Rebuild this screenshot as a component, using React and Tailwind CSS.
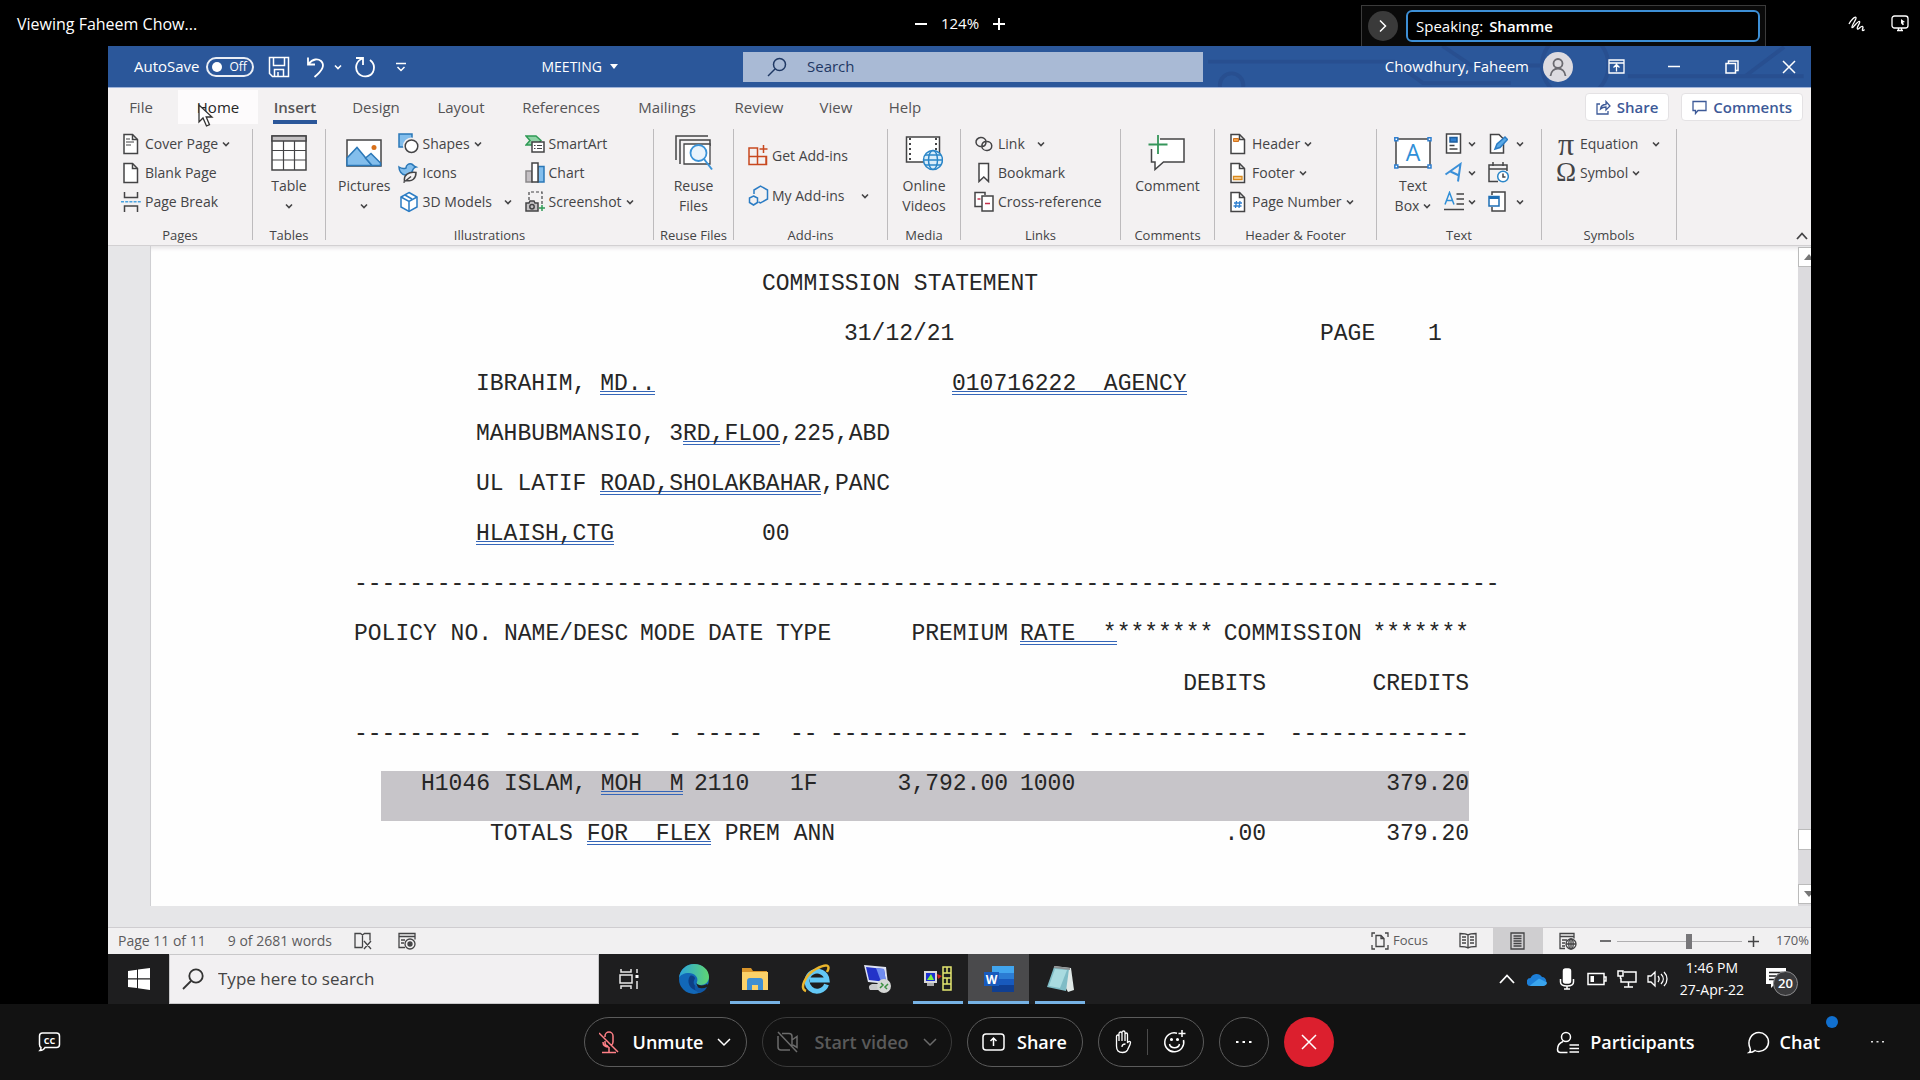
import React from "react";

const INK = "#444446";
const BLUE = "#2f7fcf";

function Svg({ w = 20, h = w, children, ...rest }) {
  return (
    <svg width={w} height={h} viewBox={`0 0 ${w} ${h}`} fill="none" stroke={INK} strokeWidth="1.5" className="shrink-0" aria-hidden="true" {...rest}>
      {children}
    </svg>
  );
}

const Caret = ({ size = 8 }) => (
  <svg width={size} height={size} viewBox="0 0 8 8" fill="none" stroke="currentColor" strokeWidth="1.6" className="shrink-0" aria-hidden="true">
    <path d="M1 2.5 4 5.5 7 2.5" />
  </svg>
);

/* ---------- ribbon icons ---------- */

const PageShape = ({ children }) => (
  <Svg w={18} h={22}>
    <path d="M2 1.5h8.5l5 5v14H2z" fill="#fff" />
    <path d="M10.5 1.5v5h5" />
    {children}
  </Svg>
);
const CoverPageIcon = () => (
  <PageShape><path d="M4 6h4M4 9h8M4 12h5" strokeWidth="1.2" /></PageShape>
);
const HeaderIcon = () => (
  <PageShape><path d="M4.5 5.5h5v3h-5z" fill="#f3a24a" stroke="#d1731f" strokeWidth="1" /></PageShape>
);
const FooterIcon = () => (
  <PageShape><path d="M4.5 14.5h8.500v3h-8.500z" fill="#fbd9a8" stroke="#d98a1e" strokeWidth="1.3" /></PageShape>
);
const PageNumberIcon = () => (
  <PageShape><path d="M7.500 10l-1 7M11 10l-1 7M5 12h8M4.500 15h8" stroke={BLUE} strokeWidth="1.3" /></PageShape>
);
const PageBreakIcon = () => (
  <Svg w={20} h={22}>
    <path d="M3.500 1v5.500h13V1M3.500 21v-6h13v6" />
    <path d="M0 10.800h20" stroke="#4aa3df" strokeDasharray="3 1.200" />
  </Svg>
);
const TableIcon = () => (
  <Svg w={36} h={36}>
    <path d="M1 1h34v34H1z" fill="#fff" />
    <path d="M1 1h34v5H1z" fill="#c4c2c4" />
    <path d="M1 15.500h34M1 25h34M12.500 6v29M23.500 6v29" strokeWidth="1.200" />
  </Svg>
);
const PicturesIcon = () => (
  <Svg w={36} h={28}>
    <path d="M1 1h34v26H1z" fill="#fff" />
    <path d="M1 19 11 8.500 26 26.500H1z" fill="#83beec" stroke="#2b78b8" />
    <path d="M19.500 19 25 14.500 34.500 24v2.500H26z" fill="#83beec" stroke="#2b78b8" />
    <circle cx="28" cy="8.500" r="2.500" fill="#d8701a" stroke="none" />
  </Svg>
);
const ShapesIcon = () => (
  <Svg w={21} h={21}>
    <path d="M1 1h13v13H1z" fill="#83beec" stroke="#2b78b8" />
    <circle cx="13.500" cy="13" r="7.800" fill="#f3f1f2" stroke="#f3f1f2" />
    <circle cx="13.500" cy="13.200" r="6.300" fill="#fff" />
  </Svg>
);
const IconsIcon = () => (
  <Svg w={21} h={21}>
    <path d="M1 5c3 2 5 2 7 1 0-3 3-5 5.500-4 2 1 2 2 4.500 3-2 .500-2 1-3 2.500-1 4-5 6-8 5.500C3.500 12.500 1 9 1 5z" fill="#83beec" stroke="#2b78b8" />
    <path d="M6.500 19c-1-6 4-9.500 11.500-8.500 0 6-4 9.500-9 8zM5.500 20.500l7.500-6" fill="#f3f1f2" />
  </Svg>
);
const CubeIcon = () => (
  <Svg w={20} h={22} stroke="#2b7cc4">
    <path d="M10 1.500 18 6v10l-8 4.500L2 16V6z" fill="#fff" />
    <path d="M2 6l8 4.500L18 6M10 10.500v10M6 4l7 4" />
  </Svg>
);
const SmartArtIcon = () => (
  <Svg w={20} h={18}>
    <path d="M1 1h10l5 4.500L12 10H1l4-4.500z" fill="#8fd3a6" stroke="#2f9a55" />
    <path d="M7 7h12v10H7z" fill="#fff" />
    <path d="M9 10.500h1.500M12 10.500h5M9 13.500h1.500M12 13.500h5" strokeWidth="1.200" />
  </Svg>
);
const ChartIcon = () => (
  <Svg w={20} h={21}>
    <path d="M1 9h6v11H1z" fill="#c4c0c4" stroke="#8a888a" />
    <path d="M13 4.500h6V20h-6z" fill="#83beec" stroke="#2b78b8" />
    <path d="M7 1h6v19H7z" fill="#fff" />
  </Svg>
);
const ScreenshotIcon = () => (
  <Svg w={20} h={21}>
    <path d="M4 9V1h13v13" strokeDasharray="3 2" strokeWidth="1.200" />
    <path d="M1 12h3l1-2h4l1 2h3v8H1z" fill="#c4c2c4" />
    <circle cx="7" cy="15.700" r="2.200" />
    <path d="M17 14v6M14 17h6" stroke="#2f9a55" />
  </Svg>
);
const ReuseIcon = () => (
  <Svg w={38} h={36}>
    <path d="M1 25V1h32M5 29V5h30v6" />
    <path d="M9 9h26v20H9z" fill="#fff" strokeWidth="1.300" />
    <circle cx="23.500" cy="18" r="8" fill="#eaf4fc" stroke="#3a93d8" strokeWidth="1.800" />
    <path d="M29 24l8 10.500" stroke="#3a93d8" strokeWidth="2" />
  </Svg>
);
const GetAddinsIcon = () => (
  <Svg w={20} h={21} stroke="#c8481f">
    <path d="M1 3h8.500v16.500H1zM1 11.500h17.500v8H9.500M9.500 8v11M15.500 0v8M11.500 4h8M18 11.500v8" />
  </Svg>
);
const MyAddinsIcon = () => (
  <Svg w={21} h={21} stroke="#2b7cc4">
    <path d="M6 9V5l6.500-4 7 4v9l-7 4-2-1" />
    <path d="M5.500 11l4 2v4.500l-4 2.500-4-2.500V13z" />
  </Svg>
);
const OnlineVideoIcon = () => (
  <Svg w={38} h={36}>
    <path d="M1.500 2h33v25h-33z" fill="#fff" />
    <path d="M5 3v23M31 3v12" strokeWidth="2" strokeDasharray="2 3" />
    <circle cx="28" cy="25" r="9.500" fill="#d9edfa" stroke="#2b86c8" />
    <ellipse cx="28" cy="25" rx="4.500" ry="9.500" stroke="#2b86c8" />
    <path d="M18.500 25h19M20 20h16M20 30h16" stroke="#2b86c8" />
  </Svg>
);
const LinkIcon = () => (
  <Svg w={20} h={16}>
    <path d="M7.500 10.500a5 4.500 0 1 1 4.500-4.800M12.500 5.500a5 4.500 0 1 1-4.700 5" />
    <path d="M12 5.700c0 3-2 4.800-4.500 4.800M7.800 10.500c0-3 2-5 4.700-5" />
  </Svg>
);
const BookmarkIcon = () => (
  <Svg w={20} h={21}><path d="M5 1.500h9.500v18l-4.700-4.500L5 19.500z" fill="#fff" /></Svg>
);
const CrossRefIcon = () => (
  <Svg w={20} h={21}>
    <path d="M8 15.500H1v-14h10V4" fill="#fff" />
    <path d="M8 5h11v15H8z" fill="#fff" />
    <path d="M3.500 8h3M11 12.500h5" stroke="#c4314b" />
  </Svg>
);
const CommentIcon = () => (
  <Svg w={38} h={36}>
    <path d="M12 4h24v23H15.500L7 34.500V27H3.500V14" fill="#fff" />
    <path d="M10 0v19M.5 9.500h19" stroke="#35955a" strokeWidth="1.800" />
  </Svg>
);
const TextBoxIcon = () => (
  <Svg w={38} h={32}>
    <path d="M2 2h34v28H2z" fill="#fff" />
    <path d="M.8.8h3v3h-3zM34 .8h3v3h-3zM.8 28h3v3h-3zM34 28h3v3h-3z" fill="#fff" stroke={BLUE} />
    <text x="19" y="24" textAnchor="middle" fontSize="23" fontFamily="Open Sans, sans-serif" fill="#2f8fd8" stroke="none">A</text>
  </Svg>
);
const QuickPartsIcon = () => (
  <Svg w={20} h={21}>
    <path d="M2.500 1h14v19h-14z" fill="#fff" />
    <path d="M6 4.500h7v4.500H6z" fill={BLUE} stroke="#1f5f9f" />
    <path d="M5.500 12.500h5M5.500 16h8" />
  </Svg>
);
const WordArtIcon = () => (
  <Svg w={20} h={21} stroke="#3a8fd8" strokeWidth="2">
    <path d="M1.500 12.500 16.500 2l-2.500 17.500M6.500 9.500l8.500 4" />
  </Svg>
);
const DropCapIcon = () => (
  <Svg w={20} h={21}>
    <path d="M1 13.500 5.500 1.500l4.500 12M2.800 9.500h5.400" stroke="#2f8fd8" />
    <path d="M12.500 3H20M12.500 8H20M12.500 13H20M0 18.500h20" />
  </Svg>
);
const SignatureIcon = () => (
  <Svg w={20} h={21}>
    <path d="M2.500 1.500h8.500l4.500 4.500v14h-13z" fill="#fff" />
    <path d="M7 16l2-5 8-7 2.500 2.500-7.500 8z" fill="#5aa9e6" stroke="#2b7cc4" />
  </Svg>
);
const DateTimeIcon = () => (
  <Svg w={21} h={21}>
    <path d="M10 19.500H1V3h18v6M1 7h18M5 0v4M15 0v4" />
    <circle cx="15" cy="14.500" r="5.300" fill="#fff" stroke="#2b86c8" />
    <path d="M15 11.500v3.500h2.500" />
  </Svg>
);
const ObjectIcon = () => (
  <Svg w={20} h={21}>
    <path d="M4 4V1h13v19H4v-4" fill="#fff" />
    <path d="M1 5.500h10v9.500H1z" fill="#fff" stroke="#1f6fb5" />
    <path d="M1 6.500h10" stroke="#1f6fb5" strokeWidth="3" />
  </Svg>
);

/* ---------- ribbon building blocks ---------- */

function Small({ icon, label, caret, gap = "gap-1" }) {
  return (
    <button className="flex h-[29px] items-center gap-1 whitespace-nowrap">
      <span className="flex w-5 justify-center">{icon}</span>
      <span className={`flex items-center ${gap}`}>
        {label && <span>{label}</span>}
        {caret && <Caret />}
      </span>
    </button>
  );
}

function Big({ icon, lines, caret, inlineCaret }) {
  return (
    <button className="flex h-[87px] flex-col items-center">
      <span className="flex h-[47px] items-center">{icon}</span>
      {lines.map((l, i) => (
        <span key={l} className="flex h-5 items-center gap-1">
          {l}
          {inlineCaret && i === lines.length - 1 && <Caret />}
        </span>
      ))}
      {caret && <span className="flex h-5 items-center"><Caret /></span>}
    </button>
  );
}

function Group({ label, width, body = "justify-center", children }) {
  return (
    <section className={`flex h-[111px] shrink-0 flex-col border-r border-[#bdbbbd] ${width}`}>
      <div className={`flex h-[87px] ${body}`}>{children}</div>
      <h2 className="mt-[9px] h-[15px] text-center text-[13px] leading-5 whitespace-nowrap">{label}</h2>
    </section>
  );
}

function Ribbon() {
  return (
    <div className="flex h-[118px] border-b border-[#d2d0d2] bg-[#f3f1f2] pt-px text-sm text-[#444446]">
      <Group label="Pages" width="w-[145px]" body="flex-col pl-[13px]">
        <Small icon={<CoverPageIcon />} label="Cover Page" caret />
        <Small icon={<PageShape />} label="Blank Page" />
        <Small icon={<PageBreakIcon />} label="Page Break" />
      </Group>
      <Group label="Tables" width="w-[73px]">
        <Big icon={<TableIcon />} lines={["Table"]} caret />
      </Group>
      <Group label="Illustrations" width="w-[328px]" body="justify-start gap-2 pl-3">
        <Big icon={<PicturesIcon />} lines={["Pictures"]} caret />
        <div className="w-[118px]">
          <Small icon={<ShapesIcon />} label="Shapes" caret />
          <Small icon={<IconsIcon />} label="Icons" />
          <Small icon={<CubeIcon />} label="3D Models" caret gap="gap-3" />
        </div>
        <div>
          <Small icon={<SmartArtIcon />} label="SmartArt" />
          <Small icon={<ChartIcon />} label="Chart" />
          <Small icon={<ScreenshotIcon />} label="Screenshot" caret />
        </div>
      </Group>
      <Group label="Reuse Files" width="w-[80px]">
        <Big icon={<ReuseIcon />} lines={["Reuse", "Files"]} />
      </Group>
      <Group label="Add-ins" width="w-[154px]" body="flex-col gap-[11px] pt-3 pl-[14px]">
        <Small icon={<GetAddinsIcon />} label="Get Add-ins" />
        <Small icon={<MyAddinsIcon />} label="My Add-ins" caret gap="gap-4" />
      </Group>
      <Group label="Media" width="w-[73px]">
        <Big icon={<OnlineVideoIcon />} lines={["Online", "Videos"]} />
      </Group>
      <Group label="Links" width="w-[160px]" body="flex-col pl-[13px]">
        <Small icon={<LinkIcon />} label="Link" caret gap="gap-3" />
        <Small icon={<BookmarkIcon />} label="Bookmark" />
        <Small icon={<CrossRefIcon />} label="Cross-reference" />
      </Group>
      <Group label="Comments" width="w-[94px]">
        <Big icon={<CommentIcon />} lines={["Comment"]} />
      </Group>
      <Group label="Header & Footer" width="w-[162px]" body="flex-col pl-[13px]">
        <Small icon={<HeaderIcon />} label="Header" caret />
        <Small icon={<FooterIcon />} label="Footer" caret />
        <Small icon={<PageNumberIcon />} label="Page Number" caret />
      </Group>
      <Group label="Text" width="w-[165px]" body="justify-start gap-3 pl-[17px]">
        <Big icon={<TextBoxIcon />} lines={["Text", "Box"]} inlineCaret />
        <div>
          <Small icon={<QuickPartsIcon />} caret />
          <Small icon={<WordArtIcon />} caret />
          <Small icon={<DropCapIcon />} caret />
        </div>
        <div>
          <Small icon={<SignatureIcon />} caret gap="pl-1" />
          <Small icon={<DateTimeIcon />} />
          <Small icon={<ObjectIcon />} caret gap="pl-1" />
        </div>
      </Group>
      <Group label="Symbols" width="w-[135px]" body="flex-col pl-[14px]">
        <Small icon={<span className="font-['Liberation_Serif',serif] text-[32px] leading-none">π</span>} label="Equation" caret gap="gap-[14px]" />
        <Small icon={<span className="font-['Liberation_Serif',serif] text-[27px] leading-none">Ω</span>} label="Symbol" caret />
      </Group>
      <button aria-label="Collapse the ribbon" className="mr-0.5 mb-1 ml-auto self-end">
        <Svg w={14} h={10}><path d="M2 8l5-5.500L12 8" strokeWidth="1.800" /></Svg>
      </button>
    </div>
  );
}

/* ---------- Word window ---------- */

function TitleBar() {
  return (
    <header className="relative grid h-[42px] shrink-0 grid-cols-[635px_460px_1fr] items-center overflow-hidden border-b border-[#9fb3d9] bg-[#2b579a] text-white">
      <svg className="absolute inset-y-0 right-0 h-full" width="620" height="42" viewBox="0 0 620 42" fill="none" stroke="#284f90" strokeWidth="4" aria-hidden="true">
        <path d="M10 16h190l30 22h90M440 31h180M560 31l40-30M250 0l30 20h70" />
        <circle cx="386" cy="20" r="34" />
        <circle cx="34" cy="40" r="12" />
      </svg>
      <div className="relative flex h-full items-center pl-[26px] text-[15px]">
        <label htmlFor="autosave" className="mr-1.5">AutoSave</label>
        <button id="autosave" role="switch" aria-checked="false" className="mr-[14px] flex h-5 w-12 items-center gap-2 rounded-full border-2 border-white/90 pl-1 text-xs leading-none">
          <span className="size-[10px] rounded-full bg-white" />Off
        </button>
        <button aria-label="Save" className="mr-4">
          <Svg w={22} h={22} stroke="#fff"><path d="M1.500 1.500h19v19h-16l-3-3zM5.500 1.500v8h11v-8M6.500 20.500v-7h9v7M10 16v4.500" /></Svg>
        </button>
        <button aria-label="Undo" className="mr-2 flex items-center gap-2">
          <Svg w={20} h={22} stroke="#fff" strokeWidth="1.800"><path d="M2 1.500v7h7M2.500 8C7 2.500 12 2.500 15 5c4 4 2 9-6.500 16" /></Svg>
          <Caret />
        </button>
        <button aria-label="Redo" className="mr-5 ml-1">
          <Svg w={22} h={22} stroke="#fff" strokeWidth="1.800"><path d="M2 2h7v7M8.500 2.500C2 5 .5 12 4 17c4 5 12 4.500 15-1 2-5 1-9-3-12" /></Svg>
        </button>
        <button aria-label="Customize quick access toolbar">
          <Svg w={10} h={10} stroke="#fff"><path d="M0 1.500h10M1.500 5 5 8.500 8.500 5" /></Svg>
        </button>
        <button className="mr-[125px] ml-auto flex items-center gap-2 text-sm">
          MEETING
          <svg width="8" height="5" viewBox="0 0 8 5" fill="#fff" aria-hidden="true"><path d="M0 0h8L4 5z" /></svg>
        </button>
      </div>
      <label className="relative flex h-[30px] items-center gap-5 bg-[#a9bad5] pl-6 text-[#1f3864]">
        <Svg w={20} h={20} stroke="#1f3864"><circle cx="12.500" cy="7.500" r="6" /><path d="M8 12 1 19" /></Svg>
        <input aria-label="Search" placeholder="Search" className="w-full bg-transparent text-[15px] outline-none placeholder:text-[#1f3864]" />
      </label>
      <div className="relative flex items-center justify-end pr-[15px] text-[15px]">
        <span className="mr-[14px] whitespace-nowrap">Chowdhury, Faheem</span>
        <span className="mr-[35px] flex size-[30px] items-center justify-center rounded-full bg-[#dddbe0]">
          <Svg w={20} h={20} stroke="#6b6a70" strokeWidth="1.800"><circle cx="10" cy="6.500" r="4.500" /><path d="M2.500 19c1-10 14-10 15 0" /></Svg>
        </span>
        <button aria-label="Ribbon display options" className="mr-[42px]">
          <Svg w={17} h={15} stroke="#fff"><path d="M1 1h15v13H1zM1 4h15M8.500 12.500V6M5.500 8.500l3-3 3 3" strokeWidth="1.300" /></Svg>
        </button>
        <button aria-label="Minimize" className="mr-[44px]">
          <Svg w={14} h={14} stroke="#fff"><path d="M1 6.500h12" /></Svg>
        </button>
        <button aria-label="Restore" className="mr-[43px]">
          <Svg w={14} h={14} stroke="#fff"><path d="M1 3.500h9.500V13H1zM3.500 3V1H13v9.500h-2" /></Svg>
        </button>
        <button aria-label="Close">
          <Svg w={14} h={14} stroke="#fff"><path d="M1 1l12 12M13 1 1 13" /></Svg>
        </button>
      </div>
    </header>
  );
}

const TABS = [
  ["File", "w-[66px] mr-1"],
  ["Home", "w-[80px] bg-[#fdfbfc] text-[#262626]"],
  ["Insert", "w-[74px]"],
  ["Design", "w-[88px]"],
  ["Layout", "w-[82px]"],
  ["References", "w-[118px]"],
  ["Mailings", "w-[94px]"],
  ["Review", "w-[90px]"],
  ["View", "w-[64px]"],
  ["Help", "w-[74px]"],
];

function Tabs() {
  return (
    <nav className="flex h-10 shrink-0 items-start bg-[#f3f1f2] pt-0.5 text-[15px] text-[#555456]">
      {TABS.map(([name, cls]) => (
        <button key={name} className={`relative flex h-[34px] items-center justify-center ${cls}`}>
          {name === "Insert" ? (
            <span className="flex h-[34px] flex-col items-center justify-end border-b-4 border-[#2b579a] px-px pb-[3px] leading-5 font-semibold">Insert</span>
          ) : (
            name
          )}
          {name === "Home" && (
            <svg width="16" height="24" viewBox="0 0 16 24" className="absolute top-3.5 left-5" fill="#fff" stroke="#333" strokeWidth="1.300" aria-hidden="true">
              <path d="M1 1v17l4-4 3.500 8 3-1.300L8.200 13H14z" />
            </svg>
          )}
        </button>
      ))}
      <button className="mt-[3px] ml-auto flex h-7 items-center gap-1.5 rounded-sm border border-[#e4e2e4] bg-white px-[10px] font-semibold text-[#3d5a98]">
        <Svg w={15} h={15} stroke="#3d5a98" strokeWidth="1.300"><path d="M4 4H1v10h11v-3M4.500 9C5 5.500 7 4.500 10 4.500V1.500L14 6l-4 4V7C8 7 6 7.500 4.500 9z" /></Svg>
        Share
      </button>
      <button className="mt-[3px] mr-2 ml-3 flex h-7 items-center gap-1.5 rounded-sm border border-[#e4e2e4] bg-white px-[10px] font-semibold text-[#3d5a98]">
        <Svg w={15} h={15} stroke="#3d5a98" strokeWidth="1.300"><path d="M1 1.500h13v9H6L3.500 13.500v-3H1z" /></Svg>
        Comments
      </button>
    </nav>
  );
}

const U = ({ children }) => (
  <span className="inline-block border-b-4 border-double border-[#3566b8] leading-[14px] whitespace-pre">{children}</span>
);
const Cell = ({ className = "", ...p }) => <td className={`p-0 align-top font-normal ${className}`} {...p} />;
const Head = ({ className = "", ...p }) => <th scope="col" className={`p-0 text-left align-top font-normal ${className}`} {...p} />;

function Statement() {
  return (
    <article className="w-[1129px] font-['Liberation_Mono',monospace] text-[23px] leading-[26px] whitespace-nowrap text-[#262626]">
      <div className="grid auto-rows-[50px] grid-cols-[34px_88px_286px_82px_108px_368px_108px_1fr]">
        <h1 className="col-start-4">COMMISSION STATEMENT</h1>
        <span className="col-start-5 row-start-2">31/12/21</span>
        <span className="col-start-7 row-start-2">PAGE</span>
        <span className="col-start-8 row-start-2">1</span>
        <span className="col-start-3 row-start-3">IBRAHIM, <U>MD..</U></span>
        <span className="col-start-6 row-start-3"><U>{"010716222  AGENCY"}</U></span>
        <span className="col-start-3 row-start-4">MAHBUBMANSIO, 3<U>RD,FLOO</U>,225,ABD</span>
        <span className="col-start-3 row-start-5">UL LATIF <U>ROAD,SHOLAKBAHAR</U>,PANC</span>
        <span className="col-start-3 row-start-6"><U>HLAISH,CTG</U></span>
        <span className="col-start-4 row-start-6">00</span>
      </div>
      <p className="h-[50px]">{"-".repeat(83)}</p>
      <table className="w-[1115px] table-fixed border-collapse">
        <colgroup>
          <col className="w-[150px]" />
          <col className="w-[136px]" />
          <col className="w-[54px]" />
          <col className="w-[82px]" />
          <col className="w-[54px]" />
          <col className="w-[190px]" />
          <col className="w-[68px]" />
          <col className="w-[190px]" />
          <col className="w-[191px]" />
        </colgroup>
        <thead>
          <tr className="h-[50px]">
            <Head>POLICY NO.</Head>
            <Head>NAME/DESC</Head>
            <Head>MODE</Head>
            <Head className="pl-[14px]">DATE</Head>
            <Head>TYPE</Head>
            <Head className="pr-3 text-right">PREMIUM</Head>
            <Head colSpan={3}>
              <span className="flex justify-between">
                <span><U>{"RATE  *"}</U>*******</span>
                <span>COMMISSION</span>
                <span>*******</span>
              </span>
            </Head>
          </tr>
          <tr className="h-[50px]">
            <Cell colSpan={7} />
            <Head className="pr-3 text-right">DEBITS</Head>
            <Head className="text-right">CREDITS</Head>
          </tr>
        </thead>
        <tbody>
          <tr className="h-[50px]">
            <Cell>----------</Cell>
            <Cell>----------</Cell>
            <Cell className="pr-3 text-right">-</Cell>
            <Cell>-----</Cell>
            <Cell className="pl-[14px]">--</Cell>
            <Cell>-------------</Cell>
            <Cell>----</Cell>
            <Cell>-------------</Cell>
            <Cell className="text-right">-------------</Cell>
          </tr>
          <tr className="h-[50px] bg-linear-to-r from-[#fefefe] from-[27px] to-[#c7c5c9] to-[27px]">
            <Cell className="pr-[14px] text-right">H1046</Cell>
            <Cell colSpan={2}>ISLAM, <U>{"MOH  M"}</U></Cell>
            <Cell>2110</Cell>
            <Cell className="pl-[14px]">1F</Cell>
            <Cell className="pr-3 text-right">3,792.00</Cell>
            <Cell>1000</Cell>
            <Cell />
            <Cell className="text-right">379.20</Cell>
          </tr>
          <tr className="h-[50px]">
            <Cell colSpan={5} className="pl-[136px]">TOTALS <U>{"FOR  FLEX"}</U> PREM ANN</Cell>
            <Cell colSpan={2} />
            <Cell className="pr-3 text-right">.00</Cell>
            <Cell className="text-right">379.20</Cell>
          </tr>
        </tbody>
      </table>
    </article>
  );
}

function Document() {
  return (
    <div className="flex grow bg-[#e6e6e8]">
      <main className="mb-[21px] ml-[42px] grow border-l border-[#cfcfd2] bg-[#fefefe] pt-[25px] pl-[203px] shadow-[inset_0_5px_4px_-3px_#e2e0e2]">
        <Statement />
      </main>
      <div className="mt-px mb-[21px] flex w-[13px] shrink-0 flex-col overflow-hidden bg-[#dcdbde]">
        <button aria-label="Scroll up" className="flex h-5 w-[18px] items-center justify-center border border-[#bbb] bg-white pl-1">
          <svg width="10" height="6" viewBox="0 0 10 6" fill="#777" aria-hidden="true"><path d="M0 6h10L5 0z" /></svg>
        </button>
        <div className="mt-auto mb-[34px] h-[21px] w-[18px] border border-[#bbb] bg-white" />
        <button aria-label="Scroll down" className="mb-0.5 flex h-5 w-[18px] items-center justify-center border border-[#bbb] bg-white pl-1">
          <svg width="10" height="6" viewBox="0 0 10 6" fill="#777" aria-hidden="true"><path d="M0 0h10L5 6z" /></svg>
        </button>
      </div>
    </div>
  );
}

function StatusBar() {
  return (
    <footer className="flex h-[27px] shrink-0 items-center border-t border-[#cfcdd0] bg-[#f1f0f1] pl-[10px] text-[13px] text-[#5c5b5d]">
      <span className="mr-[22px] text-sm">Page 11 of 11</span>
      <span className="mr-[22px] text-sm">9 of 2681 words</span>
      <button aria-label="Proofing errors" className="mr-[26px]">
        <Svg w={18} h={18} strokeWidth="1.300"><path d="M8.500 15.500H1v-14h5.500l2 1.500 2-1.500H16v7M8.500 3v12.500M10 9l7 8M17 9l-7 8" /></Svg>
      </button>
      <button aria-label="Macro recording">
        <Svg w={18} h={18} strokeWidth="1.300"><path d="M7 15.500H1v-14h16v6M1 4.500h16M3 8h4M3 11h3" /><circle cx="12" cy="12" r="5" /><circle cx="12" cy="12" r="2" fill={INK} /></Svg>
      </button>
      <button className="mr-[31px] ml-auto flex items-center gap-1">
        <Svg w={18} h={18} strokeWidth="1.300"><path d="M4 1H1v4M14 1h3v4M4 17H1v-4M14 17h3v-4M5 3.500h5l3 3v8H5zM10 3.500v3h3" /></Svg>
        Focus
      </button>
      <button aria-label="Read mode" className="mr-4">
        <Svg w={18} h={18} strokeWidth="1.300"><path d="M9 3C7 1.500 4 1.500 1 1.500v13c3 0 6 0 8 1.500 2-1.500 5-1.500 8-1.500v-13c-3 0-6 0-8 1.500zM9 3v13M3 5h4M3 8h4M3 11h4M11 5h4M11 8h4M11 11h4" /></Svg>
      </button>
      <button aria-label="Print layout" className="mr-4 flex h-full w-[50px] items-center justify-center bg-[#cfced0]">
        <Svg w={16} h={18} strokeWidth="1.300"><path d="M1 1h13v16H1zM3.500 4h8M3.500 6.500h8M3.500 9h8M3.500 11.500h8M3.500 14h8" /></Svg>
      </button>
      <button aria-label="Web layout" className="mr-[23px]">
        <Svg w={18} h={18} strokeWidth="1.300"><path d="M6 16.500H1v-15h14v5M1 4.500h14M3 8h5M3 11h3M3 14h3" /><circle cx="12" cy="12" r="5" /><path d="M7 12h10M12 7v10" /><ellipse cx="12" cy="12" rx="2.200" ry="5" /></Svg>
      </button>
      <button aria-label="Zoom out" className="mr-1.5"><Svg w={11} h={11}><path d="M0 5h11" /></Svg></button>
      <input
        type="range"
        min="10"
        max="290"
        defaultValue="172"
        aria-label="Zoom"
        className="h-4 w-[125px] appearance-none bg-[linear-gradient(#b0afb1,#b0afb1)] bg-[length:100%_1px] bg-center bg-no-repeat [&::-webkit-slider-thumb]:h-[15px] [&::-webkit-slider-thumb]:w-1.5 [&::-webkit-slider-thumb]:appearance-none [&::-webkit-slider-thumb]:bg-[#777679]"
      />
      <button aria-label="Zoom in" className="mr-[17px] ml-1.5"><Svg w={11} h={11}><path d="M0 5.500h11M5.500 0v11" /></Svg></button>
      <span className="mr-0.5">170%</span>
    </footer>
  );
}

/* ---------- Windows taskbar ---------- */

const EdgeLogo = () => (
  <Svg w={30} h={30} stroke="none">
    <defs>
      <linearGradient id="edgeTop" x1="0" x2="1"><stop offset="0" stopColor="#2ba4dc" /><stop offset="1" stopColor="#5fd672" /></linearGradient>
    </defs>
    <circle cx="15" cy="15" r="15" fill="#1268b8" />
    <path d="M0 14C1 5 8 0 15 0c9 0 15 6 15 13 0 5-4 8-8 8-3 0-5-1-4-3 2-5-3-9-8-9C5 9 1 11 0 14z" fill="url(#edgeTop)" />
    <path d="M11 12c-4 6 0 14 8 15 4 0 7-1 9-4-4 2-11 2-13-3-1-3 1-5 1-6-1-2-3-3-5-2z" fill="#0d3f86" />
    <path d="M17 19c2 3 8 3 11 1l2 2v8h-8z" fill="#1f1f20" />
    <path d="M21 29c3-1 6-3 7-6-4 2-9 2-12-2-1 4 1 7 5 8z" fill="#0f57a5" />
  </Svg>
);
const FolderLogo = () => (
  <Svg w={28} h={28} stroke="none">
    <path d="M1 3h9l2 3h14v4H1z" fill="#d9952a" />
    <path d="M1 7h26v18H1z" fill="#fbd168" />
    <path d="M6 25v-9c0-2 1-3 3-3h10c2 0 3 1 3 3v9h-5v-5h-6v5z" fill="#3f8fd2" />
  </Svg>
);
const IeLogo = () => (
  <Svg w={30} h={30} stroke="none">
    <path d="M25.500 20.500A10 10 0 1 1 26 16H9" stroke="#63c8f5" strokeWidth="5" />
    <path d="M5 27C-2 25 4 11 15 5s15-4 11 3" stroke="#eab52c" strokeWidth="2.500" />
  </Svg>
);
const RemoteLogo = () => (
  <Svg w={30} h={30} stroke="none">
    <path d="M2 1l22 2 2 17-20-2z" fill="#dfe3f2" />
    <path d="M4 3l18 2 2 13-17-2z" fill="#2332c8" />
    <path d="M14 4l8 1 2 13-5-.5z" fill="#6f8cf0" />
    <path d="M10 20h9l2 6H8c-2-3-1-5 2-6z" fill="#c9c9cc" />
    <circle cx="22" cy="22" r="7" fill="#d5d7d5" />
    <path d="M18 24l3-3-2-2M26 20l-3 3 2 2" stroke="#3b8f3f" strokeWidth="1.500" />
  </Svg>
);
const NetLogo = () => (
  <Svg w={30} h={28} stroke="none">
    <path d="M1 6h13v12H1z" fill="#d8d8d8" />
    <path d="M3 8h9v8H3z" fill="#1b2fd0" />
    <path d="M4 15l4-6 3 6z" fill="#7cf043" />
    <path d="M4 18h7v3H4z" fill="#aaa" />
    <path d="M14 9l5 2-4 3z" fill="#d3231d" />
    <path d="M20 2h8v23h-8zM20 8h8M20 13h8M20 19h8M24 2v6M24 13v6" stroke="#e3e670" strokeWidth="1.500" />
  </Svg>
);
const WordLogo = () => (
  <Svg w={30} h={28} stroke="none">
    <path d="M8 1h22v7H8z" fill="#41a5ee" />
    <path d="M8 8h22v6H8z" fill="#2b7cd3" />
    <path d="M8 14h22v6H8z" fill="#185abd" />
    <path d="M8 20h22v7H8z" fill="#103f91" />
    <path d="M0 7h15v14H0z" fill="#185abd" />
    <text x="7.500" y="18.500" textAnchor="middle" fontSize="12" fontWeight="700" fontFamily="Open Sans, sans-serif" fill="#fff">W</text>
  </Svg>
);
const NotepadLogo = () => (
  <Svg w={28} h={28} stroke="none">
    <path d="M8 1l17 2 3 22-6 2z" fill="#dfe8e6" />
    <path d="M8 2l15 2-3 22L1 22z" fill="#7fbcc6" />
    <path d="M9 4l12 1-7 18L3 21z" fill="#a9dbe0" />
    <path d="M8 1l16 2v2L8 3z" fill="#8b8f90" />
  </Svg>
);

const APPS = [
  ["Microsoft Edge", EdgeLogo, "", "bg-transparent"],
  ["File Explorer", FolderLogo, "", "w-[50px] bg-[#76b2e4]"],
  ["Internet Explorer", IeLogo, "", "bg-transparent"],
  ["Remote Desktop", RemoteLogo, "", "bg-transparent"],
  ["Session Manager", NetLogo, "", "w-[50px] bg-[#76b2e4]"],
  ["Word", WordLogo, "bg-[#4a4a4c]", "w-full bg-[#76b2e4]"],
  ["Notepad", NotepadLogo, "", "w-[50px] bg-[#76b2e4]"],
];

function Taskbar() {
  return (
    <div className="flex h-[50px] shrink-0 items-stretch bg-[#1e1e1f] text-white">
      <button aria-label="Start" className="flex w-[61px] items-center justify-center">
        <svg width="22" height="22" viewBox="0 0 22 22" fill="#fff" aria-hidden="true"><path d="M0 3l9-1.300V10.300H0zM10 1.500 22 0v10.300H10zM0 11.500h9v8.600L0 19zM10 11.500h12V22l-12-1.700z" /></svg>
      </button>
      <label className="flex w-[430px] items-center gap-[14px] border border-[#c9c8ca] bg-[#f2f0f2] pl-3">
        <Svg w={22} h={22} stroke="#333" strokeWidth="1.800"><circle cx="14" cy="8" r="6.700" /><path d="M9 13l-8 8" /></Svg>
        <input aria-label="Type here to search" placeholder="Type here to search" className="w-full bg-transparent text-[17px] outline-none placeholder:text-[#444]" />
      </label>
      <button aria-label="Task view" className="flex w-[64px] items-center justify-center pr-1">
        <Svg w={22} h={20} stroke="#e8e8e8"><path d="M3 0v3h10V0M3 20v-3h10v3M2 6h12v8H2zM19 0v4M19 12v8" /><path d="M17.500 6h3v3h-3z" fill="#fff" stroke="none" /></Svg>
      </button>
      {APPS.map(([name, Logo, cls, bar]) => (
        <button key={name} aria-label={name} className={`relative flex w-[61px] items-center justify-center ${cls}`}>
          <Logo />
          <span className={`absolute bottom-0 h-[3px] ${bar}`} />
        </button>
      ))}
      <div className="ml-auto flex items-center">
        <button aria-label="Show hidden icons" className="mr-3"><Svg w={16} h={12} stroke="#fff" strokeWidth="1.800"><path d="M1 10l7-7.500 7 7.500" /></Svg></button>
        <button aria-label="OneDrive" className="mr-3"><Svg w={20} h={14} stroke="none"><path d="M4 14a4 4 0 0 1-.5-8A6.500 6.500 0 0 1 15 5a4.600 4.600 0 0 1 1 9z" fill="#1d7fd8" /><path d="M3 13.500 12 6.500l8 4c0 2-2 3.500-4 3.500H4z" fill="#3aa5ee" /></Svg></button>
        <button aria-label="Microphone" className="mr-3"><Svg w={16} h={22} stroke="#fff"><rect x="4.500" y="1" width="7" height="14" rx="2" fill="#fff" /><path d="M1.500 11v3c0 3 2 4 6.500 4s6.500-1 6.500-4v-3M8 18v3M5 21h6" /></Svg></button>
        <button aria-label="Battery" className="mr-2.5"><Svg w={20} h={14} stroke="#fff"><path d="M1 1.500h16v11H1zM17.500 5H19v4h-1.500" /><path d="M3.500 4H7v6H3.500z" fill="#fff" stroke="none" /></Svg></button>
        <button aria-label="Network" className="mr-2.5"><Svg w={20} h={20} stroke="#fff"><path d="M7 3h12v10H4V9M11.500 13v5M7 18h9M1 2h5v5H1zM3.500 7v3" /></Svg></button>
        <button aria-label="Volume" className="mr-3"><Svg w={21} h={18} stroke="#fff"><path d="M1 6h3l4-4v14l-4-4H1zM11 6c1.500 2 1.500 4 0 6M14 4c3 3 3 7 0 10M17 2c4 4 4 10 0 14" strokeWidth="1.300" /></Svg></button>
        <div className="mr-[22px] text-center text-sm leading-[22px]">
          <p>1:46 PM</p>
          <p>27-Apr-22</p>
        </div>
        <button aria-label="20 notifications" className="relative mr-[13px] h-[34px] w-8">
          <Svg w={20} h={22} stroke="none"><path d="M0 0h20v16H9l-4 4v-4H0z" fill="#fff" /><path d="M3 4.500h14M3 8h14M3 11.500h9" stroke="#1e1e1f" strokeWidth="1.500" /></Svg>
          <span className="absolute right-0 bottom-0 flex size-[25px] items-center justify-center rounded-full border border-[#8a8a8c] bg-[#3a3a3c] text-[13px] font-semibold">20</span>
        </button>
      </div>
    </div>
  );
}

/* ---------- Meeting chrome ---------- */

function MeetingTop() {
  return (
    <div className="grid h-[46px] shrink-0 grid-cols-[1fr_auto_1fr] items-center bg-black px-[11px] text-white">
      <span className="pl-1.5 text-base">Viewing Faheem Chow...</span>
      <div className="flex items-center gap-[14px] text-[15px]">
        <button aria-label="Zoom out"><Svg w={12} h={12} stroke="#fff" strokeWidth="2"><path d="M0 6h12" /></Svg></button>
        <span>124%</span>
        <button aria-label="Zoom in"><Svg w={12} h={12} stroke="#fff" strokeWidth="2"><path d="M0 6h12M6 0v12" /></Svg></button>
      </div>
      <div className="flex items-center justify-end">
        <div className="mt-[5px] mr-[82px] flex h-[42px] w-[405px] items-center gap-2 border border-[#3b3b3b] bg-[#0a0a0a] pr-[5px] pl-1.5">
          <button aria-label="Collapse panel" className="flex size-[30px] shrink-0 items-center justify-center rounded-full bg-[#3a3a3a]">
            <Svg w={10} h={14} stroke="#fff"><path d="M2 1.500 7.500 7 2 12.500" /></Svg>
          </button>
          <p className="flex h-8 grow items-center gap-1.5 rounded-md border-2 border-[#3d8fd6] bg-black px-2 text-[15px]">
            Speaking: <b className="font-semibold">Shamme</b>
          </p>
        </div>
        <button aria-label="Annotate" className="mr-[25px]">
          <Svg w={18} h={16} stroke="#fff" strokeWidth="1.300"><path d="M1 8C3 4 7 0 8 1.500 9 3 3 10 4 11.500c1 1 6-7 7.500-6 1.500 1-3.500 6-2 7.500 1 1 3-3 5-2.500 1.500.5-1 3.500 0 4 1 .4 1.500-.5 2-1" /></Svg>
        </button>
        <button aria-label="Remote control">
          <Svg w={18} h={17} stroke="#fff" strokeWidth="1.300"><rect x="1" y="1" width="16" height="12" rx="2.500" /><path d="M6 15.500h6M7.500 13v2.500M10.500 13v2.500" /><path d="M10 4l4 3-2 .5 1 2-1.500.7-.9-2L10 9.500z" fill="#fff" stroke="none" /></Svg>
        </button>
      </div>
    </div>
  );
}

const pill = "flex h-[50px] items-center rounded-full border border-[#5b5b5b] text-lg font-semibold";

function MeetingControls() {
  return (
    <div className="grid h-[76px] shrink-0 grid-cols-[1fr_auto_1fr] items-center bg-[#121212] text-white">
      <button aria-label="Closed captions" className="ml-[38px] justify-self-start">
        <Svg w={23} h={20} stroke="#fff">
          <path d="M2 18.500c1-1 1-2 1-3-1-.5-1.500-1.500-1.500-3V4c0-2 1-3 3-3h14c2 0 3 1 3 3v8.500c0 2-1 3-3 3H7c-1 2-3 3-5 3z" />
          <text x="11.500" y="11.500" textAnchor="middle" fontSize="9" fontWeight="700" fontFamily="Open Sans, sans-serif" fill="#fff" stroke="none">CC</text>
        </Svg>
      </button>
      <div className="flex items-center gap-[15px] py-[13px] pr-[3px]">
        <button className={`${pill} w-[163px] justify-center gap-[14px]`}>
          <Svg w={20} h={23} stroke="#ff8087"><path d="M6 6V5a4 4 0 0 1 8 0v6a4 4 0 0 1-2 3.500M6 10v1c0 2 1 4 3 4M10 16v5M3 21.500h14M4 11c0 3 2 5 6 5M0 2l19 19" /></Svg>
          Unmute
          <Svg w={14} h={10} stroke="#fff"><path d="M1 2l6 6 6-6" /></Svg>
        </button>
        <button disabled className="flex h-[50px] w-[190px] items-center justify-center gap-[14px] rounded-full border border-[#3a3a3a] text-lg font-semibold text-[#5a5a5a]">
          <Svg w={24} h={22} stroke="#6b6b6b"><path d="M6 2.500h7c2 0 3 1 3 3V15M16 9l5-3.500v11L17 14M14 19H5c-2 0-3-1-3-3V5M2 1l19 20" /></Svg>
          Start video
          <Svg w={14} h={10} stroke="#6b6b6b"><path d="M1 2l6 6 6-6" /></Svg>
        </button>
        <button className={`${pill} w-[116px] justify-center gap-3`}>
          <Svg w={23} h={18} stroke="#fff"><rect x="1" y="1" width="21" height="16" rx="3" /><path d="M11.500 13V5.500M8.500 8l3-3 3 3" /></Svg>
          Share
        </button>
        <div className={`${pill} w-[106px]`}>
          <button aria-label="Raise hand" className="flex grow items-center justify-center">
            <Svg w={18} h={24} stroke="#fff" strokeWidth="1.300"><path d="M2.500 16V6.500c0-2 2.500-2 2.500 0V11 3.500c0-2 3-2 3 0V11 2.500c0-2 3-2 3 0V11 4.500c0-2 2.500-2 2.500 0V13c1-2 3-2 3-.5 0 2-2 5-3 7.500-1 2-2.500 2.500-5 2.500-4 0-6-2-6-6.500zM8 17c0-2 1.500-3 3.500-3" /></Svg>
          </button>
          <span className="h-[26px] w-px bg-[#4b4b4b]" />
          <button aria-label="Reactions" className="flex grow items-center justify-center">
            <Svg w={24} h={24} stroke="#fff"><path d="M14 3.200A9.500 9.500 0 1 0 20.500 10M6.500 14c1 5 9 5 10 0M19 0v7M15.500 3.500h7" /><circle cx="8.500" cy="9.500" r=".8" fill="#fff" /><circle cx="14.500" cy="9.500" r=".8" fill="#fff" /></Svg>
          </button>
        </div>
        <button aria-label="More options" className={`${pill} w-[50px] justify-center`}>
          <Svg w={16} h={4} stroke="none"><path d="M0 1h2.500v2H0zM6.500 1H9v2H6.500zM13 1h2.500v2H13z" fill="#fff" /></Svg>
        </button>
        <button aria-label="Leave meeting" className="flex size-[50px] items-center justify-center rounded-full bg-[#dc1f2e]">
          <Svg w={16} h={16} stroke="#fff"><path d="M1 1l14 14M15 1 1 15" /></Svg>
        </button>
      </div>
      <div className="flex items-center justify-end pr-9 text-lg font-semibold">
        <button className="mr-[52px] flex items-center gap-[10px]">
          <Svg w={24} h={23} stroke="#fff"><circle cx="10" cy="6" r="4.500" /><path d="M7 10.500c-4 1.500-5.500 4-5.500 8 0 2.500 1 3 3 3h7M13.500 14H23M13.500 17.500H23M13.500 21H23" /></Svg>
          Participants
        </button>
        <button className="relative mr-[51px] flex items-center gap-[10px]">
          <Svg w={23} h={23} stroke="#fff"><path d="M2 21.500c1.500-1 1.500-3 1-4.500C0 10 4 1.500 12 1.500c5 0 9.500 4 9.500 9.500S17 20.500 12 20.500c-1.500 0-3-.3-4-1-1.500 1.500-3.500 2-6 2z" /></Svg>
          Chat
          <span className="absolute -top-3 -right-[18px] size-3 rounded-full bg-[#1170cf]" />
        </button>
        <button aria-label="More panels"><Svg w={13} h={4} stroke="none"><path d="M0 1h2v1.500H0zM5.500 1h2v1.500h-2zM11 1h2v1.500h-2z" fill="#ddd" /></Svg></button>
      </div>
    </div>
  );
}

export default function App() {
  return (
    <div className="flex min-h-screen flex-col bg-black font-['Open_Sans','Noto_Sans',sans-serif]">
      <MeetingTop />
      <div className="mr-[109px] ml-[108px] flex grow flex-col">
        <TitleBar />
        <Tabs />
        <Ribbon />
        <Document />
        <StatusBar />
        <Taskbar />
      </div>
      <MeetingControls />
    </div>
  );
}
